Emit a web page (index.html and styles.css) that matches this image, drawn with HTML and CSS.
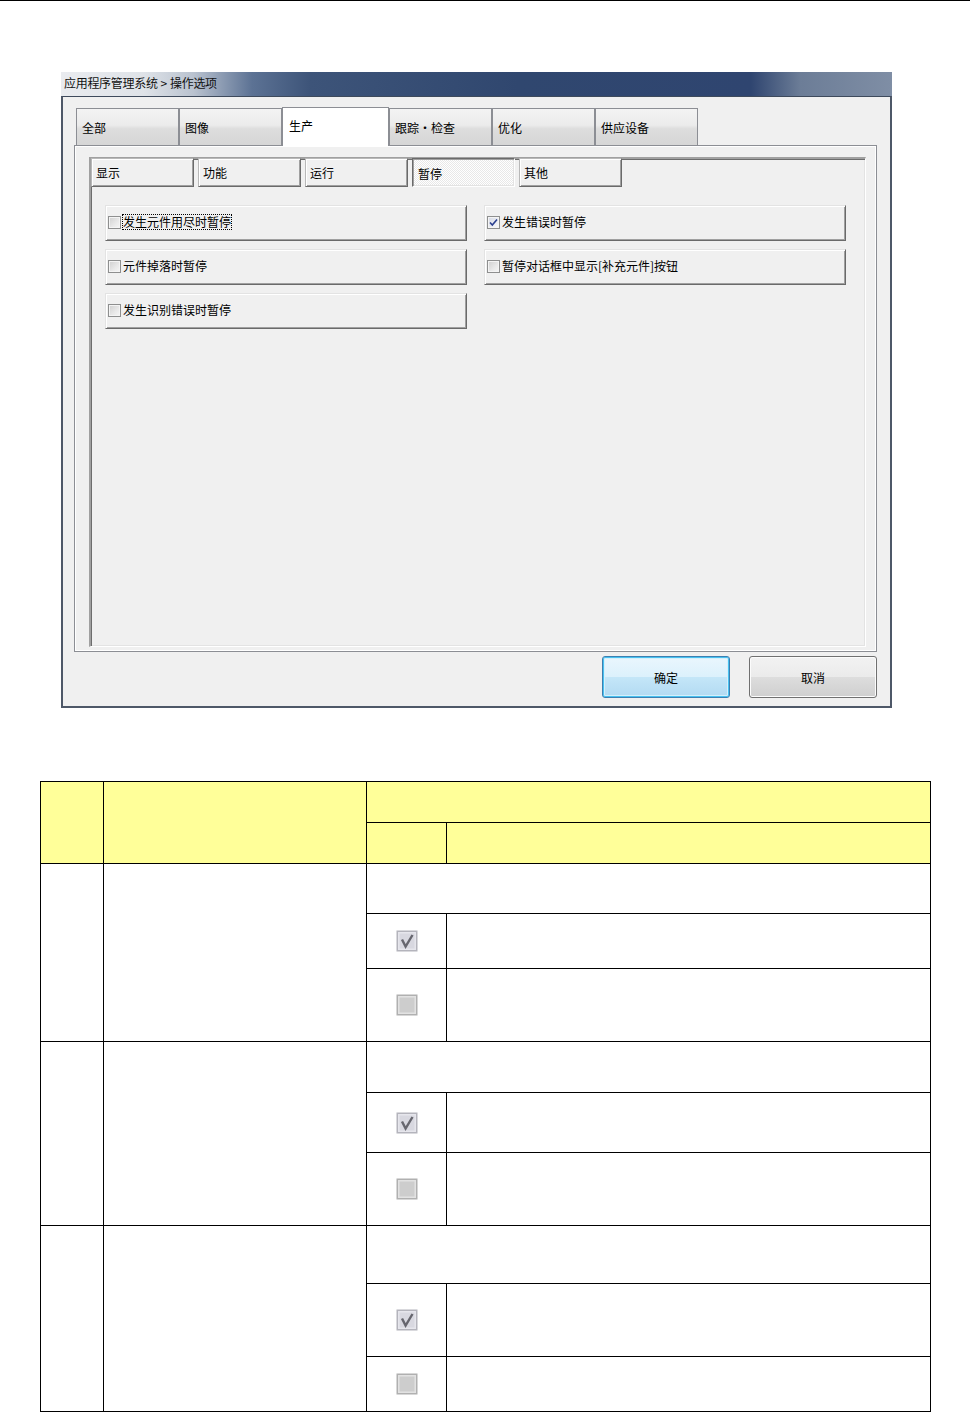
FILE: index.html
```html
<!DOCTYPE html>
<html lang="zh-CN">
<head>
<meta charset="utf-8">
<title>操作选项</title>
<link rel="stylesheet" href="styles.css">
</head>
<body>
<div class="page-rule"></div>

<div class="dialog">
  <div class="titlebar"><span class="title">应用程序管理系统<span class="sep">&gt;</span>操作选项</span></div>
  <div class="dialog-body">
    <div class="tabs">
      <div class="tab">全部</div>
      <div class="tab">图像</div>
      <div class="tab active">生产</div>
      <div class="tab">跟踪·检查</div>
      <div class="tab">优化</div>
      <div class="tab">供应设备</div>
    </div>
    <div class="tab-panel">
      <div class="sub-panel">
        <div class="subtabs">
          <div class="subtab">显示</div>
          <div class="subtab">功能</div>
          <div class="subtab">运行</div>
          <div class="subtab active">暂停</div>
          <div class="subtab">其他</div>
        </div>
        <div class="options">
          <div class="opt"><span class="cb"></span><span class="opt-text focus">发生元件用尽时暂停</span></div>
          <div class="opt"><span class="cb"></span><span class="opt-text">元件掉落时暂停</span></div>
          <div class="opt"><span class="cb"></span><span class="opt-text">发生识别错误时暂停</span></div>
          <div class="opt"><span class="cb checked"><svg viewBox="0 0 11 11" width="11" height="11"><path d="M2 5.5 L4.3 8 L9 2.5" fill="none" stroke="#2a3f8f" stroke-width="1.6"/></svg></span><span class="opt-text">发生错误时暂停</span></div>
          <div class="opt"><span class="cb"></span><span class="opt-text">暂停对话框中显示[补充元件]按钮</span></div>
        </div>
      </div>
    </div>
    <div class="buttons">
      <div class="btn primary">确定</div>
      <div class="btn">取消</div>
    </div>
  </div>
</div>

<table class="spec">
  <colgroup><col class="c1"><col class="c2"><col class="c3"><col class="c4"></colgroup>
  <tr class="head h41"><td rowspan="2"></td><td rowspan="2"></td><td colspan="2"></td></tr>
  <tr class="head h41"><td></td><td></td></tr>

  <tr class="h50"><td rowspan="3"></td><td rowspan="3"></td><td colspan="2"></td></tr>
  <tr class="h55"><td class="icon"><svg class="tcb" viewBox="0 0 22 22" width="22" height="22"><rect x="0.5" y="0.5" width="21" height="21" fill="#b4b4bc"/><rect x="2" y="2" width="18" height="18" fill="#e6e6ec"/><rect x="3.5" y="3.5" width="15" height="15" fill="#d8d8e0"/><path d="M6 9.5 L9.6 16.5 L16.5 5" fill="none" stroke="#66666e" stroke-width="2.4"/></svg></td><td></td></tr>
  <tr class="h73"><td class="icon"><svg class="tcb" viewBox="0 0 22 22" width="22" height="22"><rect x="0.5" y="0.5" width="21" height="21" fill="#b0b0b0"/><rect x="2" y="2" width="18" height="18" fill="#e2e2e2"/><rect x="3.5" y="3.5" width="15" height="15" fill="#cdcdcd"/></svg></td><td></td></tr>

  <tr class="h51"><td rowspan="3"></td><td rowspan="3"></td><td colspan="2"></td></tr>
  <tr class="h60"><td class="icon"><svg class="tcb" viewBox="0 0 22 22" width="22" height="22"><rect x="0.5" y="0.5" width="21" height="21" fill="#b4b4bc"/><rect x="2" y="2" width="18" height="18" fill="#e6e6ec"/><rect x="3.5" y="3.5" width="15" height="15" fill="#d8d8e0"/><path d="M6 9.5 L9.6 16.5 L16.5 5" fill="none" stroke="#66666e" stroke-width="2.4"/></svg></td><td></td></tr>
  <tr class="h73"><td class="icon"><svg class="tcb" viewBox="0 0 22 22" width="22" height="22"><rect x="0.5" y="0.5" width="21" height="21" fill="#b0b0b0"/><rect x="2" y="2" width="18" height="18" fill="#e2e2e2"/><rect x="3.5" y="3.5" width="15" height="15" fill="#cdcdcd"/></svg></td><td></td></tr>

  <tr class="h58"><td rowspan="3"></td><td rowspan="3"></td><td colspan="2"></td></tr>
  <tr class="h73"><td class="icon"><svg class="tcb" viewBox="0 0 22 22" width="22" height="22"><rect x="0.5" y="0.5" width="21" height="21" fill="#b4b4bc"/><rect x="2" y="2" width="18" height="18" fill="#e6e6ec"/><rect x="3.5" y="3.5" width="15" height="15" fill="#d8d8e0"/><path d="M6 9.5 L9.6 16.5 L16.5 5" fill="none" stroke="#66666e" stroke-width="2.4"/></svg></td><td></td></tr>
  <tr class="h55"><td class="icon"><svg class="tcb" viewBox="0 0 22 22" width="22" height="22"><rect x="0.5" y="0.5" width="21" height="21" fill="#b0b0b0"/><rect x="2" y="2" width="18" height="18" fill="#e2e2e2"/><rect x="3.5" y="3.5" width="15" height="15" fill="#cdcdcd"/></svg></td><td></td></tr>
</table>
</body>
</html>
```

FILE: styles.css
```css
* { box-sizing: border-box; }

html, body {
  margin: 0;
  padding: 0;
  background: #fff;
}

body {
  width: 970px;
  height: 1412px;
  overflow: hidden;
  font-family: "Noto Sans CJK SC", "Noto Sans", sans-serif;
  font-size: 12px;
  line-height: 16px;
  color: #000;
}

.page-rule {
  height: 1px;
  background: #000;
}

/* ---------- dialog ---------- */
.dialog {
  width: 831px;
  margin: 71px 0 0 61px;
}

.titlebar {
  height: 24px;
  display: flex;
  align-items: center;
  padding-left: 3px;
  background: linear-gradient(90deg,
    #e9ebef 0%, #dfe3e8 10%, #b9c2cf 16%, #5c7294 23%,
    #3d5479 30%, #30476f 55%, #2f4570 83%, #6c7d97 89%, #7f8ea5 100%);
}

.title {
  color: #111;
  margin-top: -2px;
  letter-spacing: -0.3px;
}

.title .sep {
  margin: 0 3px;
}

.dialog-body {
  border: 2px solid #4e5868;
  border-top: 1px solid #3e4a5c;
  background: #f0f0f0;
  padding: 10px 13px 8px 11px;
}

/* ---------- main tabs ---------- */
.tabs {
  height: 38px;
  display: flex;
  align-items: flex-start;
  padding-left: 2px;
  position: relative;
  z-index: 1;
}

.tab {
  width: 103px;
  height: 37px;
  margin-top: 1px;
  border: 1px solid #8c8e94;
  border-bottom: none;
  background: linear-gradient(#f3f3f3 0%, #ebebeb 45%, #dddddd 55%, #d6d6d6 100%);
  padding: 11px 0 0 5px;
}

.tab.active {
  width: 107px;
  height: 39px;
  margin-top: 0;
  background: #fff;
  padding: 10px 0 0 6px;
}

.tab-panel {
  height: 507px;
  border: 1px solid #8c8e94;
  background: #f0f0f0;
  box-shadow: inset 1px 1px 0 #fff, inset -1px -1px 0 #fff;
  padding: 11px 10px 4px 14px;
}

/* ---------- sub panel ---------- */
.sub-panel {
  height: 490px;
  border-style: solid;
  border-width: 2px 1px 1px 2px;
  border-color: #a0a0a0 #fff #fff #a0a0a0;
  box-shadow: inset 1px 1px 0 #6d6d6d, inset -1px -1px 0 #e3e3e3;
  background: #f0f0f0;
}

.subtabs {
  display: flex;
  gap: 4px;
  margin-top: -1px;
}

.subtab {
  width: 103px;
  height: 29px;
  border: 1px solid;
  border-color: #b8b8b8 #6a6a6a #6a6a6a #b8b8b8;
  box-shadow: inset 1px 1px 0 #fff, inset -1px -1px 0 #a0a0a0;
  background: #f0f0f0;
  padding: 6px 0 0 4px;
}

.subtab.active {
  border-color: #6a6a6a #fff #fff #6a6a6a;
  box-shadow: inset 1px 1px 0 #a0a0a0, inset -1px -1px 0 #e3e3e3;
  background: repeating-conic-gradient(#ffffff 0 25%, #e8e8e8 0 50%) 0 0 / 2px 2px;
  padding: 7px 0 0 5px;
}

/* ---------- options ---------- */
.options {
  display: grid;
  grid-auto-flow: column;
  grid-template-rows: repeat(3, 36px);
  grid-template-columns: 362px 362px;
  column-gap: 17px;
  row-gap: 8px;
  margin: 18px 0 0 14px;
}

.opt {
  display: flex;
  align-items: center;
  border: 1px solid;
  border-color: #e3e3e3 #6a6a6a #6a6a6a #e3e3e3;
  box-shadow: inset 1px 1px 0 #fff, inset -1px -1px 0 #a0a0a0;
  background: #f0f0f0;
  padding: 0 0 2px 2px;
}

.cb {
  width: 13px;
  height: 13px;
  flex: none;
  border: 1px solid #8e8f8f;
  background: linear-gradient(135deg, #cfcfcf 0%, #e9e9e9 60%, #f6f6f6 100%);
  box-shadow: inset 0 0 0 1px #f4f4f4;
  display: flex;
  align-items: center;
  justify-content: center;
}

.cb.checked {
  background: linear-gradient(135deg, #d4d8e4 0%, #eceef4 60%, #f8f8fa 100%);
}

.cb svg { display: block; }

.opt-text {
  margin-left: 2px;
}

.opt-text.focus {
  outline: 1px dotted #000;
  outline-offset: -1px;
  margin-left: 1px;
  padding: 0 1px;
}

/* ---------- buttons ---------- */
.buttons {
  display: flex;
  justify-content: flex-end;
  gap: 19px;
  margin-top: 4px;
}

.btn {
  width: 128px;
  height: 42px;
  border: 1px solid #707070;
  border-radius: 3px;
  background: linear-gradient(#f2f2f2 0%, #ebebeb 49%, #dddddd 51%, #cfcfcf 100%);
  box-shadow: inset 0 0 0 1px #fcfcfc;
  display: flex;
  align-items: center;
  justify-content: center;
  padding-top: 1px;
}

.btn.primary {
  border-color: #3c7fb1;
  background: linear-gradient(#eaf6fd 0%, #dcf1fc 49%, #c4e6f8 51%, #b2daf2 100%);
  box-shadow: inset 0 0 0 1px #48c1f0, inset 0 0 0 2px #d4f0fc;
}

/* ---------- spec table ---------- */
.spec {
  margin: 73px 0 0 40px;
  width: 890px;
  border-collapse: collapse;
  table-layout: fixed;
}

.spec col.c1 { width: 63px; }
.spec col.c2 { width: 263px; }
.spec col.c3 { width: 80px; }
.spec col.c4 { width: 484px; }

.spec td {
  border: 1px solid #000;
  padding: 0;
}

.spec tr.head td { background: #ffff99; }

.spec tr.h41 { height: 41px; }
.spec tr.h50 { height: 50px; }
.spec tr.h51 { height: 51px; }
.spec tr.h55 { height: 55px; }
.spec tr.h58 { height: 58px; }
.spec tr.h60 { height: 60px; }
.spec tr.h73 { height: 73px; }

.spec td.icon { text-align: center; vertical-align: middle; }

.tcb { display: block; margin: 0 auto; }
```
